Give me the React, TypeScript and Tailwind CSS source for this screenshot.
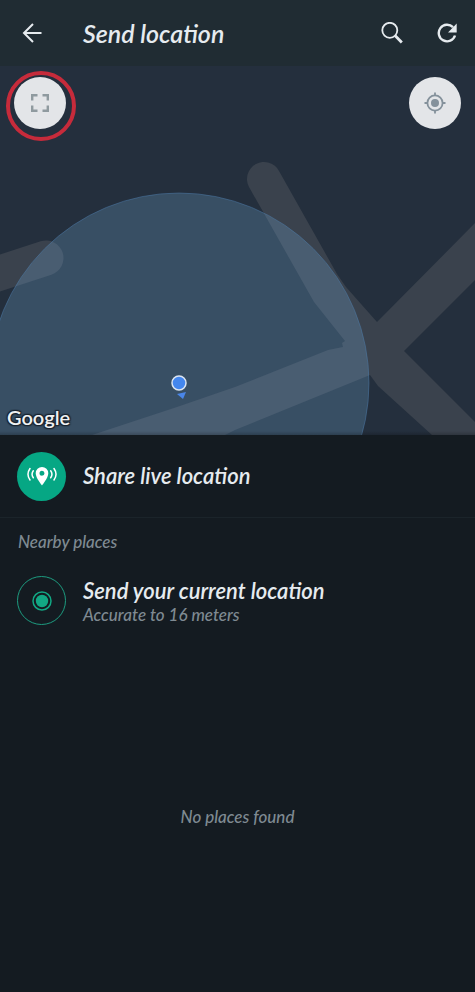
const BackIcon = () => (
    <svg viewBox="0 0 20 20" className="size-5" fill="none" stroke="currentColor" strokeWidth="2">
        <path d="M19.500 10H2.500M11 1 2 10l9 9" />
    </svg>
);

const SearchIcon = () => (
    <svg viewBox="0 0 22 22" className="size-[22px]" fill="none" stroke="currentColor">
        <circle cx="8.800" cy="8.300" r="7.500" strokeWidth="1.800" />
        <path d="m14 13.500 6.800 7" strokeWidth="2.800" />
    </svg>
);

const RefreshIcon = () => (
    <svg viewBox="0 0 20 20" className="size-5" fill="none" stroke="currentColor" strokeWidth="2.400">
        <path d="M18 12.500A8.300 8.300 0 1 1 16 4.200" />
        <path d="M19.700.5v9h-8.700z" fill="currentColor" stroke="none" />
    </svg>
);

const ExpandIcon = () => (
    <svg viewBox="0 0 18 18" className="size-[18px]" fill="none" stroke="currentColor" strokeWidth="2.400">
        <path d="M1.200 6.500V1.200h5.300M11.500 1.200h5.300v5.300M16.800 11.500v5.300h-5.300M6.500 16.800H1.200v-5.300" />
    </svg>
);

const TargetIcon = () => (
    <svg viewBox="0 0 22 22" className="size-[22px]" fill="none" stroke="currentColor" strokeWidth="1.800">
        <circle cx="11" cy="11" r="7.600" />
        <circle cx="11" cy="11" r="4" fill="currentColor" stroke="none" />
        <path d="M11 .5v3M11 18.500v3M.5 11h3M18.500 11h3" />
    </svg>
);

const LivePinIcon = () => (
    <svg viewBox="0 0 32 20" className="h-5 w-8" fill="none" stroke="currentColor" strokeWidth="1.500" strokeLinecap="round">
        <path
            d="M16 1a6.300 6.300 0 0 0-6.300 6.300C9.700 12 16 19.500 16 19.500S22.300 12 22.300 7.300A6.300 6.300 0 0 0 16 1zm0 8.700a2.500 2.500 0 1 1 0-5 2.500 2.500 0 0 1 0 5z"
            fill="currentColor"
            stroke="none"
        />
        <path d="M7.300 4.800a6 6 0 0 0 0 7M24.700 4.800a6 6 0 0 1 0 7M4 2.500a10 10 0 0 0 0 11.500M28 2.500a10 10 0 0 1 0 11.500" />
    </svg>
);

const CurrentIcon = () => (
    <svg viewBox="0 0 20 20" className="size-5" fill="none" stroke="currentColor" strokeWidth="1.500">
        <circle cx="10" cy="10" r="9" />
        <circle cx="10" cy="10" r="6.200" fill="currentColor" stroke="none" />
    </svg>
);

const MapCanvas = () => (
    <svg viewBox="0 0 475 369" preserveAspectRatio="xMidYMid slice" className="h-full w-full" aria-hidden="true">
        <g fill="#3a424d">
            <path d="M-40 220 46 192" stroke="#3a424d" strokeWidth="35" strokeLinecap="round" />
            <path d="M249 121A17 17 0 0 1 279 105L337 208 346 221 377 256 485 147V204L404 285 485 366V369H432L378 320 370 309 235 364 225 369H92L177 341 235 321 328 284 343 281 342 277 345 275 314 236Z" />
        </g>
        <circle cx="179" cy="317" r="190" fill="#7ebaea" fillOpacity="0.23" stroke="#4c7aa8" strokeOpacity="0.5" />
        <path d="m177 328 9-2-3 7z" fill="#4a86e8" />
        <circle cx="179" cy="317" r="7" fill="#4487ee" stroke="#dbe5f2" strokeWidth="1.500" />
    </svg>
);

const App: React.FC = () => (
    <div className="flex min-h-screen flex-col bg-[#141b21] font-['Lato',sans-serif] text-[#e6ebef] italic">
        <header className="flex h-[66px] items-center bg-[#202c33] pr-[18px] pl-[22px]">
            <button type="button" aria-label="Back">
                <BackIcon />
            </button>
            <h1 className="ml-[41px] flex-1 text-[25px] leading-7 font-semibold">Send location</h1>
            <button type="button" aria-label="Search">
                <SearchIcon />
            </button>
            <button type="button" aria-label="Refresh" className="ml-[34px]">
                <RefreshIcon />
            </button>
        </header>

        <section aria-label="Map" className="relative h-[369px] overflow-hidden bg-[#242f3d]">
            <MapCanvas />
            <div className="absolute inset-x-0 bottom-0 h-1 bg-linear-to-b from-transparent to-black/20" />
            <button
                type="button"
                aria-label="Full screen"
                className="absolute top-[11px] left-[14px] flex size-[52px] items-center justify-center rounded-full bg-[#e3e5e8] text-[#8f9a9f]"
            >
                <ExpandIcon />
            </button>
            <span className="pointer-events-none absolute top-[5px] left-[6px] size-[70px] rounded-full border-4 border-[#c62b3b]" />
            <button
                type="button"
                aria-label="My location"
                className="absolute top-[11px] right-[14px] flex size-[52px] items-center justify-center rounded-full bg-[#e3e5e8] text-[#84919b]"
            >
                <TargetIcon />
            </button>
            <span className="absolute bottom-1 left-[7px] text-xl leading-7 font-semibold text-[#f0f1f2] not-italic [text-shadow:0_0_2px_#1b2530,1px_1px_1px_#1b2530,-1px_-1px_1px_#1b2530,1px_-1px_1px_#1b2530,-1px_1px_1px_#1b2530]">
                Google
            </span>
        </section>

        <main>
            <button type="button" className="flex h-[83px] w-full items-center gap-[17px] border-b border-[#1b242a] px-[17px] text-left">
                <span className="flex size-[49px] items-center justify-center rounded-full bg-[#06a784] text-white">
                    <LivePinIcon />
                </span>
                <span className="text-[22px] leading-7 font-semibold">Share live location</span>
            </button>

            <h2 className="px-[18px] pt-3 text-[17px] leading-6 font-medium text-[#7f8a92]">Nearby places</h2>

            <button type="button" className="flex w-full items-center gap-[17px] px-[17px] pt-[22px] pb-3 text-left">
                <span className="flex size-[49px] items-center justify-center rounded-full border border-[#1d9c80] text-[#12a884]">
                    <CurrentIcon />
                </span>
                <span className="flex flex-col">
                    <span className="text-[22px] leading-7 font-semibold">Send your current location</span>
                    <span className="text-[17px] leading-5 font-medium text-[#7f8a92]">Accurate to 16 meters</span>
                </span>
            </button>

            <p className="pt-[168px] pb-8 text-center text-[17px] leading-6 font-medium text-[#7f8a92]">No places found</p>
        </main>
    </div>
);

export default App;
